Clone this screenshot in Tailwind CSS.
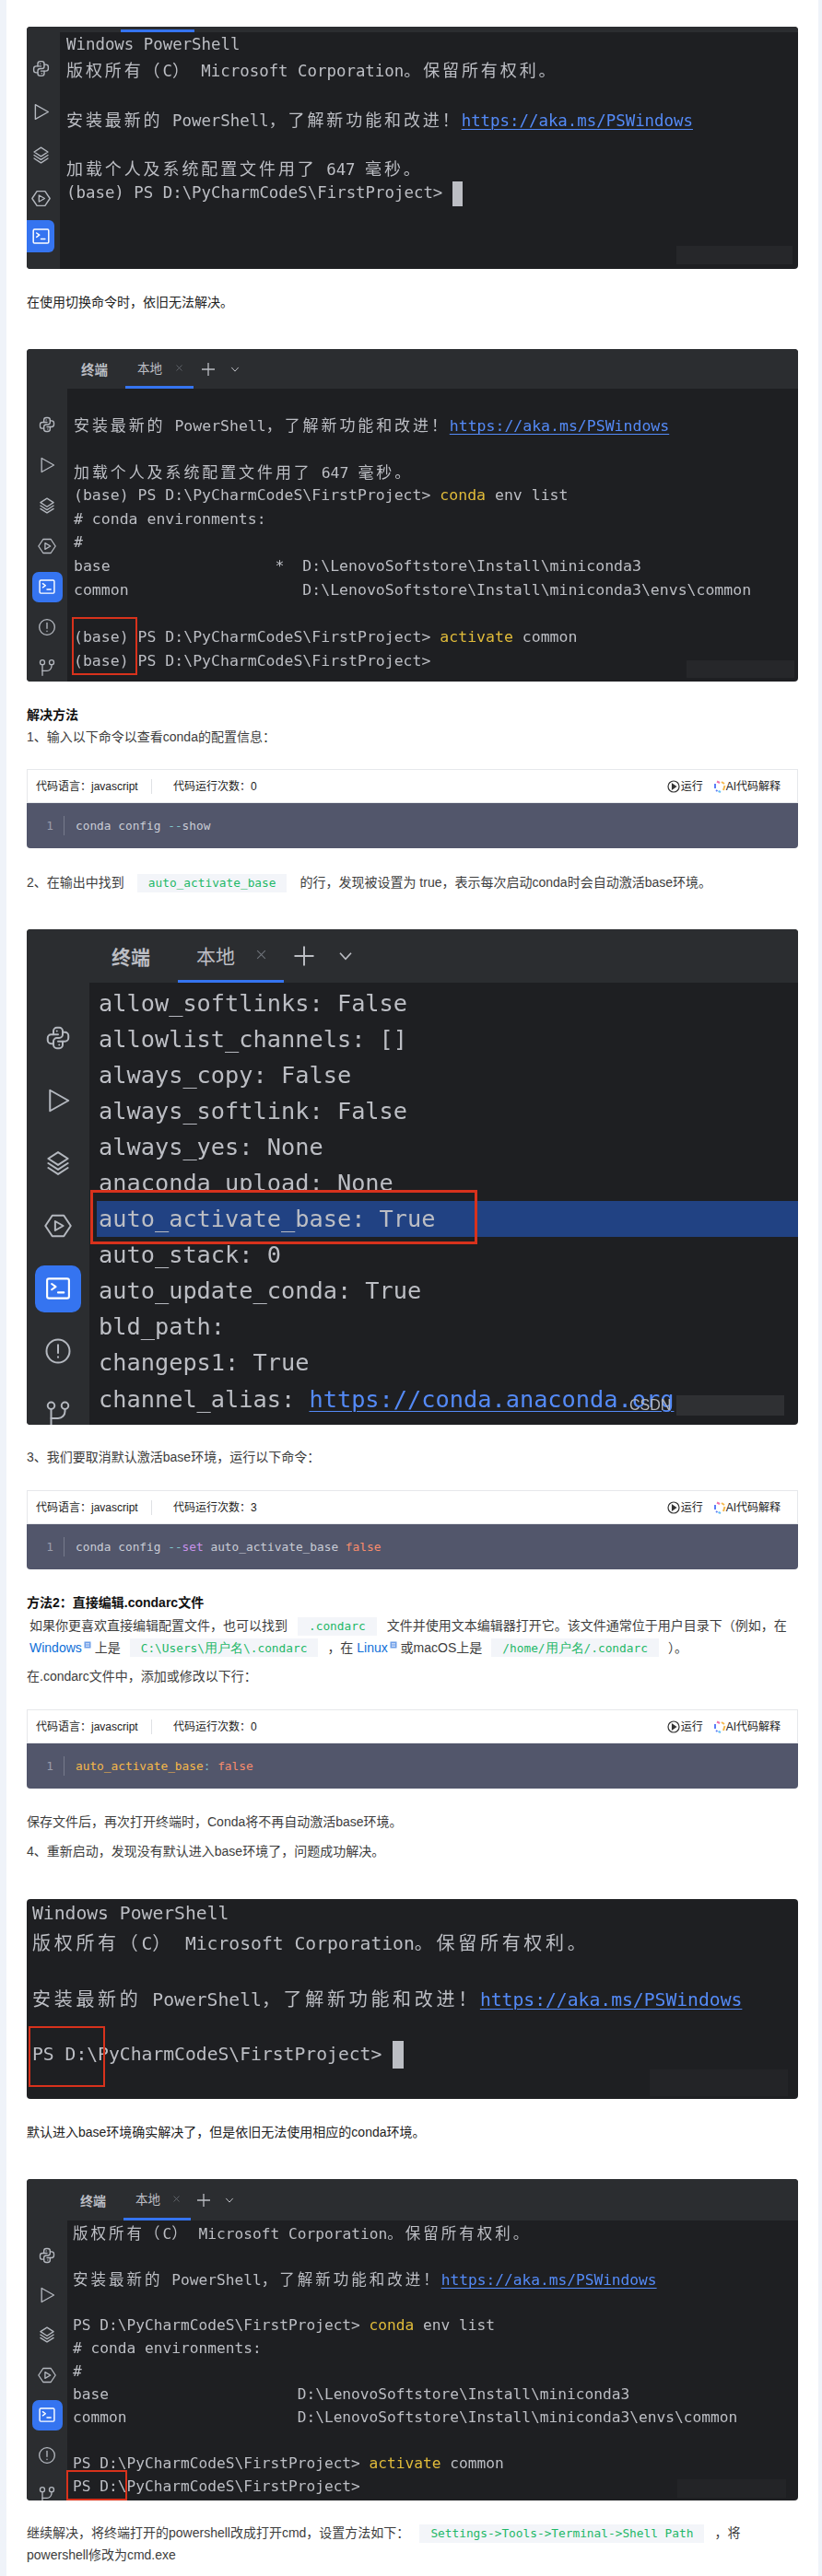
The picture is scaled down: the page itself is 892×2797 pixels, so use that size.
<!DOCTYPE html>
<html lang="en">
<head>
  <meta charset="UTF-8">
  <meta name="viewport" content="width=device-width, initial-scale=1.0">
  <title>conda activate</title>
  <script src="https://cdn.jsdelivr.net/npm/@tailwindcss/browser@4"></script>
</head>
<body class="bg-[#eff3f9]">

<!-- shared icons -->
<svg class="hidden" xmlns="http://www.w3.org/2000/svg">
  <symbol id="i-python" viewBox="0 0 24 24" fill="none" stroke="currentColor" stroke-width="1.6" stroke-linecap="round" stroke-linejoin="round">
    <path d="M12 9h-6a3 3 0 0 0 -3 3v2a3 3 0 0 0 3 3h2"/>
    <path d="M12 15h6a3 3 0 0 0 3 -3v-2a3 3 0 0 0 -3 -3h-2"/>
    <path d="M8 9v-3a3 3 0 0 1 3 -3h2a3 3 0 0 1 3 3v3a3 3 0 0 1 -3 3h-2a3 3 0 0 0 -3 3v3a3 3 0 0 0 3 3h2a3 3 0 0 0 3 -3v-3"/>
    <path d="M11 6v.01"/><path d="M13 18v.01"/>
  </symbol>
  <symbol id="i-play" viewBox="0 0 24 24" fill="none" stroke="currentColor" stroke-width="1.6" stroke-linejoin="round">
    <path d="M5 3l16 9-16 9z"/>
  </symbol>
  <symbol id="i-layers" viewBox="0 0 24 24" fill="none" stroke="currentColor" stroke-width="1.6" stroke-linecap="round" stroke-linejoin="round">
    <path d="M12 2.5l8.5 5.5-8.5 5.5-8.5-5.5z"/><path d="M3.5 12l8.5 5.5 8.5-5.5"/><path d="M3.5 16l8.5 5.5 8.5-5.5"/>
  </symbol>
  <symbol id="i-hex" viewBox="0 0 24 24" fill="none" stroke="currentColor" stroke-width="1.6" stroke-linejoin="round">
    <path d="M7 3h10l6 9-6 9h-10l-6-9z"/><path d="M9.5 8l7 4-7 4z"/>
  </symbol>
  <symbol id="i-term" viewBox="0 0 24 24" fill="none" stroke="currentColor" stroke-width="1.7" stroke-linecap="round" stroke-linejoin="round">
    <rect x="2.5" y="3.5" width="19" height="17" rx="1.5"/><path d="M6.5 8l3.5 2.5-3.5 2.5"/><path d="M12 15.5h5"/>
  </symbol>
  <symbol id="i-alert" viewBox="0 0 24 24" fill="none" stroke="currentColor" stroke-width="1.6" stroke-linecap="round">
    <circle cx="12" cy="12" r="10"/><path d="M12 6.5v7"/><path d="M12 17v.4"/>
  </symbol>
  <symbol id="i-git" viewBox="0 0 24 24" fill="none" stroke="currentColor" stroke-width="1.6" stroke-linecap="round" stroke-linejoin="round">
    <circle cx="6" cy="5" r="3"/><circle cx="18" cy="5" r="3"/><path d="M6 8v14"/><path d="M18 8v2a6 6 0 0 1-6 6H6"/>
  </symbol>
  <symbol id="i-x" viewBox="0 0 12 12" fill="none" stroke="currentColor" stroke-width="1"><path d="M2 2l8 8M10 2l-8 8"/></symbol>
  <symbol id="i-plus" viewBox="0 0 16 16" fill="none" stroke="currentColor" stroke-width="1.3"><path d="M8 1v14M1 8h14"/></symbol>
  <symbol id="i-chev" viewBox="0 0 12 12" fill="none" stroke="currentColor" stroke-width="1.2"><path d="M1.5 3.5l4.5 5 4.5-5"/></symbol>
  <symbol id="i-run" viewBox="0 0 14 14" fill="none" stroke="#333" stroke-width="1.2"><circle cx="7" cy="7" r="6"/><path d="M5.5 4.2l4 2.8-4 2.8z" fill="#333"/></symbol>
  <symbol id="i-ai" viewBox="0 0 14 14" fill="none" stroke-width="2">
    <path d="M2 4v5" stroke="#5b7cf7"/><path d="M4 1.5l3 1.5" stroke="#f272a8"/><path d="M9 2l3 2" stroke="#f5b94d"/><path d="M12.5 6l-1.5 5" stroke="#f5b94d"/><path d="M8 13l-2.5-1" stroke="#67c1f5"/><path d="M3 11l1.5 1" stroke="#5b7cf7"/>
  </symbol>
  <symbol id="i-book" viewBox="0 0 8 8"><rect x="0.5" y="0.5" width="7" height="7" fill="#6f9fe8"/><path d="M2 2.5h4M2 4h4M2 5.5h4" stroke="#fff" stroke-width="0.6"/></symbol>
</svg>

<main class="ml-[7px] w-[881px] h-[2797px] overflow-hidden bg-white px-[22px] pt-[29px] text-[14px] leading-[24px] text-[#3d3d3d] font-['Liberation_Sans','Noto_Sans_CJK_SC',sans-serif]">

  <!-- terminal 1 -->
  <div class="relative h-[263px] overflow-hidden rounded-[4px] bg-[#1e1f22] text-[#bcbec4] font-['DejaVu_Sans_Mono','Noto_Sans_CJK_SC',monospace]">
    <div class="flex h-full blur-[0.4px]">
      <div class="w-[36px] shrink-0 bg-[#2b2d30] pt-[22px] text-[#b4b8bf]">
        <div class="flex h-[47px] w-[30px] items-center justify-center"><svg class="h-[21px] w-[21px]"><use href="#i-python"/></svg></div>
        <div class="flex h-[47px] w-[30px] items-center justify-center"><svg class="h-[21px] w-[21px]"><use href="#i-play"/></svg></div>
        <div class="flex h-[47px] w-[30px] items-center justify-center"><svg class="h-[21px] w-[21px]"><use href="#i-layers"/></svg></div>
        <div class="flex h-[47px] w-[30px] items-center justify-center"><svg class="h-[21px] w-[21px]"><use href="#i-hex"/></svg></div>
        <div class="flex h-[35px] w-[30px] items-center justify-center rounded-r-[6px] bg-[#3574f0] text-white"><svg class="h-[21px] w-[21px]"><use href="#i-term"/></svg></div>
      </div>
      <div class="min-w-0 flex-1">
        <div class="h-[6px] bg-[#2b2d30]"><div class="ml-[66px] h-full w-[80px] border-b-[3px] border-[#3574f0]"></div></div>
        <div class="pl-[7px] text-[17.4px] leading-[26.9px] *:whitespace-pre">
          <div class="h-[26.9px]">Windows PowerShell</div>
          <div class="h-[26.9px]"><span class="font-['Noto_Sans_CJK_SC'] text-[18px] tracking-[2.9px]">版权所有（</span>C<span class="font-['Noto_Sans_CJK_SC'] text-[18px] tracking-[2.9px]">）</span> Microsoft Corporation<span class="font-['Noto_Sans_CJK_SC'] text-[18px] tracking-[2.9px]">。保留所有权利。</span></div>
          <div class="h-[26.9px]"></div>
          <div class="h-[26.9px]"><span class="font-['Noto_Sans_CJK_SC'] text-[18px] tracking-[2.9px]">安装最新的</span> PowerShell<span class="font-['Noto_Sans_CJK_SC'] text-[18px] tracking-[2.9px]">，了解新功能和改进！</span><span class="text-[#548af7] underline decoration-1 underline-offset-[3px]">https://aka.ms/PSWindows</span></div>
          <div class="h-[26.9px]"></div>
          <div class="h-[26.9px]"><span class="font-['Noto_Sans_CJK_SC'] text-[18px] tracking-[2.9px]">加载个人及系统配置文件用了</span> 647 <span class="font-['Noto_Sans_CJK_SC'] text-[18px] tracking-[2.9px]">毫秒。</span></div>
          <div class="h-[26.9px]">(base) PS D:\PyCharmCodeS\FirstProject> <span class="inline-block h-[27px] w-[11px] bg-[#bcbec4] align-middle"></span></div>
        </div>
      </div>
    </div>
    <div class="absolute top-[238px] left-[705px] h-[20px] w-[126px] bg-[#26272a]"></div>
  </div>

  <p class="mt-[24px] text-[#222]">在使用切换命令时，依旧无法解决。</p>

  <!-- terminal 2 -->
  <div class="relative mt-[39px] h-[361px] overflow-hidden rounded-[4px] bg-[#1e1f22] text-[#bcbec4] font-['DejaVu_Sans_Mono','Noto_Sans_CJK_SC',monospace]">
    <div class="flex h-full blur-[0.4px]">
      <div class="w-[44px] shrink-0 bg-[#2b2d30] pt-[60px] text-[#b4b8bf]">
        <div class="flex h-[44px] items-center justify-center"><svg class="h-[20px] w-[20px]"><use href="#i-python"/></svg></div>
        <div class="flex h-[44px] items-center justify-center"><svg class="h-[20px] w-[20px]"><use href="#i-play"/></svg></div>
        <div class="flex h-[44px] items-center justify-center"><svg class="h-[20px] w-[20px]"><use href="#i-layers"/></svg></div>
        <div class="flex h-[44px] items-center justify-center"><svg class="h-[20px] w-[20px]"><use href="#i-hex"/></svg></div>
        <div class="flex h-[44px] items-center justify-center"><div class="flex h-[33px] w-[33px] items-center justify-center rounded-[7px] bg-[#3574f0] text-white"><svg class="h-[20px] w-[20px]"><use href="#i-term"/></svg></div></div>
        <div class="flex h-[44px] items-center justify-center"><svg class="h-[20px] w-[20px]"><use href="#i-alert"/></svg></div>
        <div class="flex h-[44px] items-center justify-center"><svg class="h-[20px] w-[20px]"><use href="#i-git"/></svg></div>
      </div>
      <div class="min-w-0 flex-1">
        <div class="flex h-[43px] items-center bg-[#2b2d30] pl-[15px] font-['Noto_Sans_CJK_SC'] text-[14.5px]">
          <span class="w-[48px] font-bold">终端</span>
          <div class="flex h-full w-[74px] items-center border-b-[3px] border-[#3574f0] pl-[13px] text-[13.5px]">本地<svg class="ml-[14px] h-[9px] w-[9px] text-[#6f737a]"><use href="#i-x"/></svg></div>
          <svg class="ml-[8px] h-[16px] w-[16px]"><use href="#i-plus"/></svg>
          <svg class="ml-[16px] h-[10px] w-[10px]"><use href="#i-chev"/></svg>
        </div>
        <div class="pt-[26px] pl-[7px] text-[16.5px] leading-[25.7px] *:whitespace-pre">
          <div class="h-[25.7px]"><span class="font-['Noto_Sans_CJK_SC'] text-[17px] tracking-[2.9px]">安装最新的</span> PowerShell<span class="font-['Noto_Sans_CJK_SC'] text-[17px] tracking-[2.9px]">，了解新功能和改进！</span><span class="text-[#548af7] underline decoration-1 underline-offset-[3px]">https://aka.ms/PSWindows</span></div>
          <div class="h-[25.7px]"></div>
          <div class="h-[25.7px]"><span class="font-['Noto_Sans_CJK_SC'] text-[17px] tracking-[2.9px]">加载个人及系统配置文件用了</span> 647 <span class="font-['Noto_Sans_CJK_SC'] text-[17px] tracking-[2.9px]">毫秒。</span></div>
          <div class="h-[25.7px]">(base) PS D:\PyCharmCodeS\FirstProject> <span class="text-[#e0bb3a]">conda</span> env list</div>
          <div class="h-[25.7px]"># conda environments:</div>
          <div class="h-[25.7px]">#</div>
          <div class="h-[25.7px]">base                  *  D:\LenovoSoftstore\Install\miniconda3</div>
          <div class="h-[25.7px]">common                   D:\LenovoSoftstore\Install\miniconda3\envs\common</div>
          <div class="h-[25.7px]"></div>
          <div class="h-[25.7px]">(base) PS D:\PyCharmCodeS\FirstProject> <span class="text-[#e0bb3a]">activate</span> common</div>
          <div class="h-[25.7px]">(base) PS D:\PyCharmCodeS\FirstProject></div>
        </div>
      </div>
    </div>
    <div class="absolute top-[291px] left-[49px] h-[63px] w-[71px] border-2 border-[#d8321c]"></div>
    <div class="absolute top-[338px] left-[716px] h-[19px] w-[117px] bg-[#26272a]"></div>
  </div>

  <p class="mt-[24px] font-bold text-[#111]">解决方法</p>
  <p>1、输入以下命令以查看conda的配置信息：</p>

  <!-- code block 1 -->
  <div class="mt-[23px]">
    <div class="flex h-[37px] items-center border border-[#e6e8eb] pr-[18px] pl-[9px] text-[12px] text-[#222]">
      <span class="w-[125px]">代码语言：javascript</span>
      <span class="h-[16px] w-px bg-[#dfe1e5]"></span>
      <span class="ml-[23px]">代码运行次数：0</span>
      <span class="ml-auto flex items-center"><svg class="h-[14px] w-[14px]"><use href="#i-run"/></svg><span class="ml-px">运行</span><svg class="ml-[11px] h-[14px] w-[14px]"><use href="#i-ai"/></svg><span>AI代码解释</span></span>
    </div>
    <div class="flex h-[49px] items-center rounded-b-[4px] bg-[#52566b] font-['DejaVu_Sans_Mono',monospace] text-[12.8px] text-[#c9ccd6]">
      <span class="w-[41px] border-r border-[#777b8c] pr-[11px] text-right leading-[21px] text-[#9a9dab]">1</span>
      <span class="ml-[12px]">conda config <span class="text-[#7fc4c9]">--</span>show</span>
    </div>
  </div>

  <p class="mt-[25px]">2、在输出中找到<code class="mx-[14px] inline-block h-[20px] bg-[#f3f5f9] px-[12px] font-['DejaVu_Sans_Mono',monospace] text-[12.8px] leading-[20px] text-[#1fb868]">auto_activate_base</code>的行，发现被设置为 true，表示每次启动conda时会自动激活base环境。</p>

  <!-- terminal 3 -->
  <div class="relative mt-[39px] h-[538px] overflow-hidden rounded-[4px] bg-[#1e1f22] text-[#bcbec4] font-['DejaVu_Sans_Mono','Noto_Sans_CJK_SC',monospace]">
    <div class="flex h-full blur-[0.4px]">
      <div class="w-[68px] shrink-0 bg-[#2b2d30] pt-[84.5px] text-[#b4b8bf]">
        <div class="flex h-[67.9px] items-center justify-center"><svg class="h-[30px] w-[30px]"><use href="#i-python"/></svg></div>
        <div class="flex h-[67.9px] items-center justify-center"><svg class="h-[30px] w-[30px]"><use href="#i-play"/></svg></div>
        <div class="flex h-[67.9px] items-center justify-center"><svg class="h-[30px] w-[30px]"><use href="#i-layers"/></svg></div>
        <div class="flex h-[67.9px] items-center justify-center"><svg class="h-[30px] w-[30px]"><use href="#i-hex"/></svg></div>
        <div class="flex h-[67.9px] items-center justify-center"><div class="flex h-[51px] w-[50px] items-center justify-center rounded-[10px] bg-[#3574f0] text-white"><svg class="h-[30px] w-[30px]"><use href="#i-term"/></svg></div></div>
        <div class="flex h-[67.9px] items-center justify-center"><svg class="h-[30px] w-[30px]"><use href="#i-alert"/></svg></div>
        <div class="flex h-[67.9px] items-center justify-center"><svg class="h-[30px] w-[30px]"><use href="#i-git"/></svg></div>
      </div>
      <div class="min-w-0 flex-1">
        <div class="flex h-[58px] items-center bg-[#2b2d30] pl-[24px] font-['Noto_Sans_CJK_SC'] text-[21px]">
          <span class="w-[72px] font-bold">终端</span>
          <div class="flex h-full w-[115px] items-center border-b-[3px] border-[#3574f0] pl-[20px]">本地<svg class="ml-[22px] h-[13px] w-[13px] text-[#6f737a]"><use href="#i-x"/></svg></div>
          <svg class="ml-[10px] h-[24px] w-[24px]"><use href="#i-plus"/></svg>
          <svg class="ml-[25px] h-[16px] w-[16px]"><use href="#i-chev"/></svg>
        </div>
        <div class="pt-[2.5px] text-[25.3px] leading-[39.1px] *:whitespace-pre">
          <div class="h-[39.1px] pl-[10px]">allow_softlinks: False</div>
          <div class="h-[39.1px] pl-[10px]">allowlist_channels: []</div>
          <div class="h-[39.1px] pl-[10px]">always_copy: False</div>
          <div class="h-[39.1px] pl-[10px]">always_softlink: False</div>
          <div class="h-[39.1px] pl-[10px]">always_yes: None</div>
          <div class="h-[39.1px] pl-[10px]">anaconda_upload: None</div>
          <div class="ml-[8px] h-[39.1px] bg-[#214283] pl-[2px]">auto_activate_base: True</div>
          <div class="h-[39.1px] pl-[10px]">auto_stack: 0</div>
          <div class="h-[39.1px] pl-[10px]">auto_update_conda: True</div>
          <div class="h-[39.1px] pl-[10px]">bld_path:</div>
          <div class="h-[39.1px] pl-[10px]">changeps1: True</div>
          <div class="h-[39.1px] pl-[10px]">channel_alias: <span class="text-[#548af7] underline decoration-1 underline-offset-[4px]">https://conda.anaconda.org</span></div>
        </div>
      </div>
    </div>
    <div class="absolute top-[283px] right-0 left-[68px] h-[12px] bg-[#1e1f22]"></div>
    <div class="absolute top-[283px] left-[69px] h-[59px] w-[420px] border-[3px] border-[#d8321c]"></div>
    <div class="absolute top-[506px] left-[705px] h-[22px] w-[117px] bg-[#2f3033]"></div>
    <span class="absolute top-[506px] left-[654px] font-['Liberation_Sans'] text-[16px] leading-[22px] text-[#b5b7bb]">CSDN</span>
  </div>

  <p class="mt-[23px]">3、我们要取消默认激活base环境，运行以下命令：</p>

  <!-- code block 2 -->
  <div class="mt-[24px]">
    <div class="flex h-[37px] items-center border border-[#e6e8eb] pr-[18px] pl-[9px] text-[12px] text-[#222]">
      <span class="w-[125px]">代码语言：javascript</span>
      <span class="h-[16px] w-px bg-[#dfe1e5]"></span>
      <span class="ml-[23px]">代码运行次数：3</span>
      <span class="ml-auto flex items-center"><svg class="h-[14px] w-[14px]"><use href="#i-run"/></svg><span class="ml-px">运行</span><svg class="ml-[11px] h-[14px] w-[14px]"><use href="#i-ai"/></svg><span>AI代码解释</span></span>
    </div>
    <div class="flex h-[49px] items-center rounded-b-[4px] bg-[#52566b] font-['DejaVu_Sans_Mono',monospace] text-[12.8px] text-[#c9ccd6]">
      <span class="w-[41px] border-r border-[#777b8c] pr-[11px] text-right leading-[21px] text-[#9a9dab]">1</span>
      <span class="ml-[12px]">conda config <span class="text-[#7fc4c9]">--</span><span class="text-[#c792ea]">set</span> auto_activate_base <span class="text-[#f78c6c]">false</span></span>
    </div>
  </div>

  <p class="mt-[24px] font-bold text-[#111]">方法2：直接编辑.condarc文件</p>
  <p class="mt-[1px] pl-[3px] whitespace-nowrap">如果你更喜欢直接编辑配置文件，也可以找到<code class="mx-[11px] inline-block h-[20px] bg-[#f3f5f9] px-[12px] font-['DejaVu_Sans_Mono',monospace] text-[12.8px] leading-[20px] text-[#1fb868]">.condarc</code>文件并使用文本编辑器打开它。该文件通常位于用户目录下（例如，在<br><a class="text-[#0e6fd8]">Windows</a><svg class="ml-[2px] inline-block h-[8px] w-[8px] align-[4px]"><use href="#i-book"/></svg> 上是<code class="mx-[10px] inline-block h-[20px] bg-[#f3f5f9] px-[12px] font-['DejaVu_Sans_Mono',monospace] text-[12.8px] leading-[20px] text-[#1fb868]">C:\Users\<span class="text-[14px]">用户名</span>\.condarc</code>，在 <a class="text-[#0e6fd8]">Linux</a><svg class="ml-[2px] inline-block h-[8px] w-[8px] align-[4px]"><use href="#i-book"/></svg> 或macOS上是<code class="mx-[10px] inline-block h-[20px] bg-[#f3f5f9] px-[12px] font-['DejaVu_Sans_Mono',monospace] text-[12.8px] leading-[20px] text-[#1fb868]">/home/<span class="text-[14px]">用户名</span>/.condarc</code>）。</p>
  <p class="mt-[7px]">在.condarc文件中，添加或修改以下行：</p>

  <!-- code block 3 -->
  <div class="mt-[24px]">
    <div class="flex h-[37px] items-center border border-[#e6e8eb] pr-[18px] pl-[9px] text-[12px] text-[#222]">
      <span class="w-[125px]">代码语言：javascript</span>
      <span class="h-[16px] w-px bg-[#dfe1e5]"></span>
      <span class="ml-[23px]">代码运行次数：0</span>
      <span class="ml-auto flex items-center"><svg class="h-[14px] w-[14px]"><use href="#i-run"/></svg><span class="ml-px">运行</span><svg class="ml-[11px] h-[14px] w-[14px]"><use href="#i-ai"/></svg><span>AI代码解释</span></span>
    </div>
    <div class="flex h-[49px] items-center rounded-b-[4px] bg-[#52566b] font-['DejaVu_Sans_Mono',monospace] text-[12.8px] text-[#c9ccd6]">
      <span class="w-[41px] border-r border-[#777b8c] pr-[11px] text-right leading-[21px] text-[#9a9dab]">1</span>
      <span class="ml-[12px]"><span class="text-[#f5b84a]">auto_activate_base</span><span class="text-[#7fc4c9]">:</span> <span class="text-[#f78c6c]">false</span></span>
    </div>
  </div>

  <p class="mt-[24px]">保存文件后，再次打开终端时，Conda将不再自动激活base环境。</p>
  <p class="mt-[8px]">4、重新启动，发现没有默认进入base环境了，问题成功解决。</p>

  <!-- terminal 4 -->
  <div class="relative mt-[40px] h-[217px] overflow-hidden rounded-[4px] bg-[#1e1f22] text-[#bcbec4] font-['DejaVu_Sans_Mono','Noto_Sans_CJK_SC',monospace]">
    <div class="h-full pt-[1px] pl-[6px] text-[19.7px] leading-[30.6px] *:whitespace-pre blur-[0.4px]">
      <div class="h-[30.6px]">Windows PowerShell</div>
      <div class="h-[30.6px]"><span class="font-['Noto_Sans_CJK_SC'] text-[20px] tracking-[3.7px]">版权所有（</span>C<span class="font-['Noto_Sans_CJK_SC'] text-[20px] tracking-[3.7px]">）</span> Microsoft Corporation<span class="font-['Noto_Sans_CJK_SC'] text-[20px] tracking-[3.7px]">。保留所有权利。</span></div>
      <div class="h-[30.6px]"></div>
      <div class="h-[30.6px]"><span class="font-['Noto_Sans_CJK_SC'] text-[20px] tracking-[3.7px]">安装最新的</span> PowerShell<span class="font-['Noto_Sans_CJK_SC'] text-[20px] tracking-[3.7px]">，了解新功能和改进！</span><span class="text-[#548af7] underline decoration-1 underline-offset-[3px]">https://aka.ms/PSWindows</span></div>
      <div class="h-[30.6px]"></div>
      <div class="h-[30.6px]">PS D:\PyCharmCodeS\FirstProject> <span class="inline-block h-[30px] w-[12px] bg-[#bcbec4] align-middle"></span></div>
    </div>
    <div class="absolute top-[138px] left-[2px] h-[66px] w-[83px] border-2 border-[#d8321c]"></div>
    <div class="absolute top-[185px] left-[676px] h-[29px] w-[150px] bg-[#232427]"></div>
  </div>

  <p class="mt-[24px] text-[#222]">默认进入base环境确实解决了，但是依旧无法使用相应的conda环境。</p>

  <!-- terminal 5 -->
  <div class="relative mt-[39px] h-[349px] overflow-hidden rounded-[4px] bg-[#1e1f22] text-[#bcbec4] font-['DejaVu_Sans_Mono','Noto_Sans_CJK_SC',monospace]">
    <div class="flex h-full blur-[0.4px]">
      <div class="w-[44px] shrink-0 bg-[#2b2d30] pt-[61px] text-[#b4b8bf]">
        <div class="flex h-[43.4px] items-center justify-center"><svg class="h-[20px] w-[20px]"><use href="#i-python"/></svg></div>
        <div class="flex h-[43.4px] items-center justify-center"><svg class="h-[20px] w-[20px]"><use href="#i-play"/></svg></div>
        <div class="flex h-[43.4px] items-center justify-center"><svg class="h-[20px] w-[20px]"><use href="#i-layers"/></svg></div>
        <div class="flex h-[43.4px] items-center justify-center"><svg class="h-[20px] w-[20px]"><use href="#i-hex"/></svg></div>
        <div class="flex h-[43.4px] items-center justify-center"><div class="flex h-[33px] w-[33px] items-center justify-center rounded-[7px] bg-[#3574f0] text-white"><svg class="h-[20px] w-[20px]"><use href="#i-term"/></svg></div></div>
        <div class="flex h-[43.4px] items-center justify-center"><svg class="h-[20px] w-[20px]"><use href="#i-alert"/></svg></div>
        <div class="flex h-[43.4px] items-center justify-center"><svg class="h-[20px] w-[20px]"><use href="#i-git"/></svg></div>
      </div>
      <div class="min-w-0 flex-1">
        <div class="flex h-[45px] items-center bg-[#2b2d30] pl-[14px] font-['Noto_Sans_CJK_SC'] text-[14px]">
          <span class="w-[47px] font-bold">终端</span>
          <div class="flex h-full w-[73px] items-center border-b-[3px] border-[#3574f0] pl-[13px] text-[13.5px]">本地<svg class="ml-[13px] h-[9px] w-[9px] text-[#6f737a]"><use href="#i-x"/></svg></div>
          <svg class="ml-[6px] h-[16px] w-[16px]"><use href="#i-plus"/></svg>
          <svg class="ml-[15px] h-[10px] w-[10px]"><use href="#i-chev"/></svg>
        </div>
        <div class="pt-[1px] pl-[6px] text-[16.2px] leading-[25px] *:whitespace-pre">
          <div class="h-[25px]"><span class="font-['Noto_Sans_CJK_SC'] text-[16.5px] tracking-[3px]">版权所有（</span>C<span class="font-['Noto_Sans_CJK_SC'] text-[16.5px] tracking-[3px]">）</span> Microsoft Corporation<span class="font-['Noto_Sans_CJK_SC'] text-[16.5px] tracking-[3px]">。保留所有权利。</span></div>
          <div class="h-[25px]"></div>
          <div class="h-[25px]"><span class="font-['Noto_Sans_CJK_SC'] text-[16.5px] tracking-[3px]">安装最新的</span> PowerShell<span class="font-['Noto_Sans_CJK_SC'] text-[16.5px] tracking-[3px]">，了解新功能和改进！</span><span class="text-[#548af7] underline decoration-1 underline-offset-[3px]">https://aka.ms/PSWindows</span></div>
          <div class="h-[25px]"></div>
          <div class="h-[25px]">PS D:\PyCharmCodeS\FirstProject> <span class="text-[#e0bb3a]">conda</span> env list</div>
          <div class="h-[25px]"># conda environments:</div>
          <div class="h-[25px]">#</div>
          <div class="h-[25px]">base                     D:\LenovoSoftstore\Install\miniconda3</div>
          <div class="h-[25px]">common                   D:\LenovoSoftstore\Install\miniconda3\envs\common</div>
          <div class="h-[25px]"></div>
          <div class="h-[25px]">PS D:\PyCharmCodeS\FirstProject> <span class="text-[#e0bb3a]">activate</span> common</div>
          <div class="h-[25px]">PS D:\PyCharmCodeS\FirstProject></div>
        </div>
      </div>
    </div>
    <div class="absolute top-[316px] left-[43px] h-[33px] w-[66px] border-2 border-[#d8321c]"></div>
    <div class="absolute top-[326px] left-[706px] h-[20px] w-[118px] bg-[#232427]"></div>
  </div>

  <p class="mt-[23px] whitespace-nowrap">继续解决，将终端打开的powershell改成打开cmd，设置方法如下：<code class="mx-[11px] inline-block h-[20px] bg-[#f3f5f9] px-[12px] font-['DejaVu_Sans_Mono',monospace] text-[12.8px] leading-[20px] text-[#1fb868]">Settings-&gt;Tools-&gt;Terminal-&gt;Shell Path</code>，将<br>powershell修改为cmd.exe</p>
</main>

</body>
</html>
